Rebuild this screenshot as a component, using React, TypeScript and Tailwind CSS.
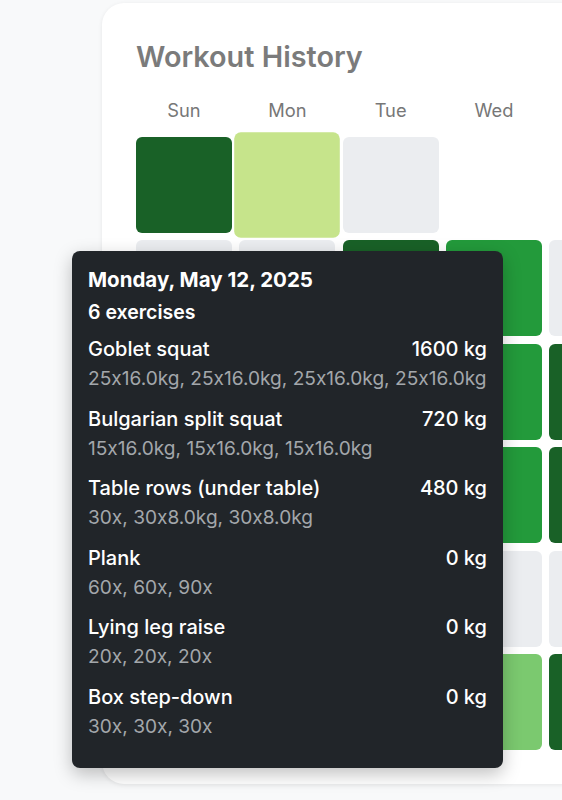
import React from 'react';

// GitHub-style contribution palette
const LEVELS = ['bg-[#ebedf0]', 'bg-[#c6e48b]', 'bg-[#7bc96f]', 'bg-[#239a3b]', 'bg-[#196127]'];

const DAYS = ['Sun', 'Mon', 'Tue', 'Wed', 'Thu', 'Fri', 'Sat'];

// -1 = no day (future), otherwise palette index
const WEEKS: number[][] = [
  [4, 1, 0, -1, -1, -1, -1],
  [0, 0, 4, 3, 0, 3, 0],
  [3, 0, 2, 3, 4, 0, 2],
  [0, 4, 0, 3, 4, 3, 0],
  [2, 0, 3, 0, 0, 4, 0],
  [0, 3, 0, 2, 4, 0, 3],
];

const EXERCISES = [
  { name: 'Goblet squat', total: '1600 kg', sets: '25x16.0kg, 25x16.0kg, 25x16.0kg, 25x16.0kg' },
  { name: 'Bulgarian split squat', total: '720 kg', sets: '15x16.0kg, 15x16.0kg, 15x16.0kg' },
  { name: 'Table rows (under table)', total: '480 kg', sets: '30x, 30x8.0kg, 30x8.0kg' },
  { name: 'Plank', total: '0 kg', sets: '60x, 60x, 90x' },
  { name: 'Lying leg raise', total: '0 kg', sets: '20x, 20x, 20x' },
  { name: 'Box step-down', total: '0 kg', sets: '30x, 30x, 30x' },
];

function Tooltip() {
  return (
    <div className="absolute left-[72px] top-[251px] w-[431px] rounded-lg bg-[#212529] px-4 pt-[13px] pb-[28px] text-white shadow-[0_6px_18px_rgba(0,0,0,0.25)] z-20">
      <div className="h-8 leading-8 text-[20.5px] font-bold">Monday, May 12, 2025</div>
      <div className="h-8 leading-8 text-[19.5px] font-semibold">6 exercises</div>
      <div className="mt-[6px] flex flex-col gap-[11.6px]">
        {EXERCISES.map((ex) => (
          <div key={ex.name}>
            <div className="flex h-[30px] items-center justify-between text-[20px] font-medium leading-[30px]">
              <span>{ex.name}</span>
              <span>{ex.total}</span>
            </div>
            <div className="h-7 leading-7 text-[19.1px] text-[#a3a7ab] whitespace-nowrap">{ex.sets}</div>
          </div>
        ))}
      </div>
    </div>
  );
}

export default function App() {
  return (
    <div
      className="relative min-h-screen w-screen overflow-hidden bg-[#f8f9fa] [font-feature-settings:'calt'_0]"
      style={{ fontFamily: 'Inter, "Noto Sans", sans-serif' }}
    >
      <div className="ml-[102px] mt-[3px] w-[790px] rounded-[22px] bg-white pl-[34px] pt-[34px] pb-[34px] shadow-[0_1px_4px_rgba(0,0,0,0.08)]">
        <h2 className="h-[40px] text-[28.8px] font-semibold leading-[40px] text-[#7b7b7b]">Workout History</h2>
        <div className="mt-[16px] grid grid-cols-[repeat(7,96px)] gap-x-[7.3px]">
          {DAYS.map((d, i) => (
            <div key={d} className="flex h-[34px] justify-center text-[18.3px] leading-[34px] text-[#777]">
              {i < 4 ? <span>{d}</span> : null}
            </div>
          ))}
        </div>
        <div className="mt-[10px] grid grid-cols-[repeat(7,96px)] auto-rows-[96px] gap-x-[7.3px] gap-y-[7.4px]">
          {WEEKS.map((week, wi) =>
            week.map((lvl, di) =>
              lvl < 0 ? (
                <div key={`${wi}-${di}`} />
              ) : (
                <div
                  key={`${wi}-${di}`}
                  className={
                    wi === 0 && di === 1
                      ? `${LEVELS[lvl]} rounded-md scale-110 relative z-10`
                      : `${LEVELS[lvl]} rounded-md`
                  }
                />
              )
            )
          )}
        </div>
      </div>
      <Tooltip />
    </div>
  );
}
